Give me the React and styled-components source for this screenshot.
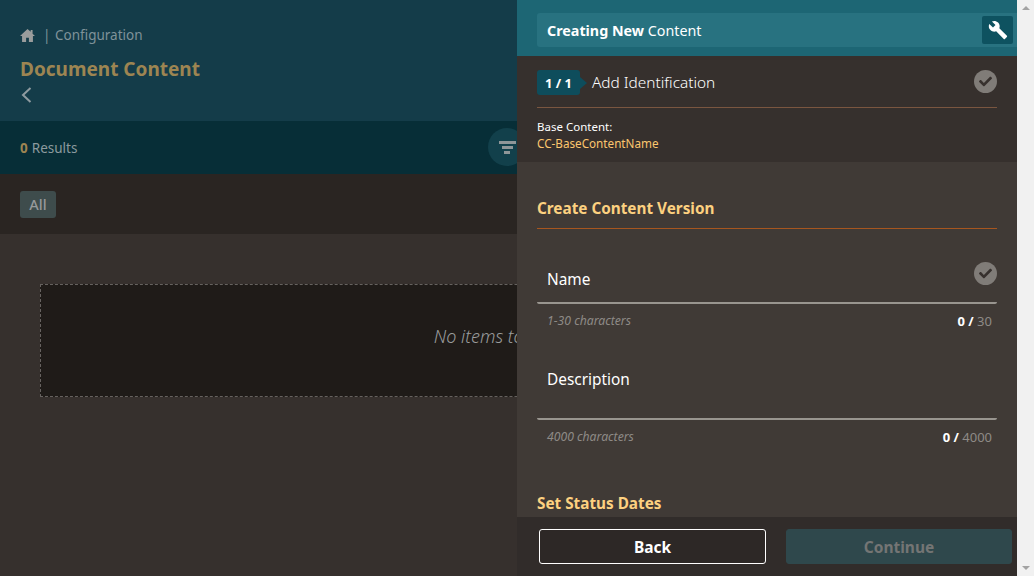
// App.jsx
import React from "react";
import styled, { createGlobalStyle } from "styled-components";
import { FaCheck } from "react-icons/fa";
import { MdBuild } from "react-icons/md";

const GlobalStyle = createGlobalStyle`
  html, body {
    margin: 0;
    padding: 0;
    height: 100%;
    overflow: hidden;
    background: #36302d;
    font-family: "Noto Sans", "Open Sans", sans-serif;
  }
  * { box-sizing: border-box; }
`;

const Screen = styled.div`
  position: relative;
  display: flex;
  width: 1034px;
  height: 576px;
  overflow: hidden;
`;

const Page = styled.main`
  width: 1017px;
  height: 576px;
  display: flex;
  flex-direction: column;
  flex: none;
  background: #36302d;
`;

const Masthead = styled.header`
  height: 121px;
  background: #143c49;
  padding: 25px 20px 0;
`;

const Breadcrumb = styled.div`
  display: flex;
  align-items: center;
  height: 20px;
  color: #7f9299;
  font-size: 13.5px;
`;

const HomeIcon = styled.svg`
  width: 15px;
  height: 15px;
  fill: #9a9c9c;
`;

const Divider = styled.span`
  margin: 0 8px 0 8px;
  width: 4px;
  color: #7f9299;
`;

const PageTitle = styled.h1`
  margin: 0;
  padding-top: 9px;
  font-size: 19px;
  line-height: 30px;
  font-weight: 700;
  color: #9d8552;
`;

const BackChevron = styled.svg`
  display: block;
  margin-top: 2px;
  width: 12px;
  height: 18px;
`;

const ResultsBar = styled.div`
  height: 53px;
  display: flex;
  align-items: center;
  padding: 0 20px;
  background: #072e37;
  font-size: 13.5px;
  color: #8c9a9e;
  b { color: #9d8552; margin-right: 4px; font-weight: 700; }
`;

const FilterButton = styled.span`
  margin-left: 411px;
  margin-top: -1px;
  width: 38px;
  height: 38px;
  flex: none;
  border-radius: 50%;
  background: #12404b;
  display: flex;
  flex-direction: column;
  align-items: center;
  justify-content: center;
  gap: 2px;
`;

const FilterLine = styled.i`
  display: block;
  height: 3px;
  width: ${(p) => p.$w}px;
  background: #8f9698;
`;

const TabStrip = styled.div`
  height: 60px;
  padding: 17px 20px 0;
  background: #2a2522;
`;

const Tab = styled.span`
  display: inline-flex;
  align-items: center;
  justify-content: center;
  width: 36px;
  height: 27px;
  padding-bottom: 2px;
  border-radius: 3px;
  background: #3e4c4c;
  color: #97999a;
  font-size: 14.5px;
  font-weight: 500;
`;

const EmptyArea = styled.div`
  padding: 50px 40px 0;
`;

const EmptyBox = styled.div`
  height: 113px;
  padding-bottom: 9px;
  border: 1px dashed #66625f;
  background: #1f1b18;
  display: flex;
  align-items: center;
  justify-content: center;
  font-size: 18px;
  font-style: italic;
  font-weight: 300;
  color: #9a9c9c;
`;

const Scrollbar = styled.div`
  width: 17px;
  height: 576px;
  flex: none;
  background: #f1f1f1;
  display: flex;
  flex-direction: column;
  justify-content: space-between;
  align-items: center;
  padding: 6px 0;
`;

const ScrollArrow = styled.i`
  width: 0;
  height: 0;
  border-left: 4px solid transparent;
  border-right: 4px solid transparent;
  ${(p) => (p.$down ? "border-top: 4px solid #a3a3a3;" : "border-bottom: 4px solid #a3a3a3;")}
`;

/* the drawer lies over the page */
const Drawer = styled.aside`
  position: absolute;
  top: 0;
  left: 517px;
  width: 500px;
  height: 576px;
  display: flex;
  flex-direction: column;
  background: #403a36;
  color: #fff;
`;

const DrawerTop = styled.div`
  height: 56px;
  flex: none;
  padding: 13px 0 0 20px;
  background: #1d6674;
`;

const TitleBar = styled.div`
  height: 34px;
  display: flex;
  align-items: center;
  justify-content: space-between;
  padding: 0 4px 0 10px;
  background: #287280;
  border-radius: 3px 0 0 3px;
  font-size: 14.3px;
  b { font-weight: 700; }
`;

const ToolButton = styled.span`
  width: 31px;
  height: 28px;
  border-radius: 2px;
  background: #0e5260;
  display: flex;
  align-items: center;
  justify-content: center;
  svg { width: 20px; height: 20px; }
`;

const StepSection = styled.div`
  height: 106px;
  flex: none;
  padding: 14px 20px 0;
  background: #36302d;
`;

const StepRow = styled.div`
  height: 38px;
  display: flex;
  align-items: flex-start;
  border-bottom: 1px solid #7a5640;
  font-size: 15.4px;
  font-weight: 300;
`;

const StepLabel = styled.span`
  line-height: 26px;
  flex: 1;
`;

const StepBadge = styled.span`
  position: relative;
  width: 43px;
  height: 25px;
  margin-right: 12px;
  border-radius: 3px;
  background: #0e4d5c;
  display: flex;
  align-items: center;
  justify-content: center;
  font-size: 13px;
  font-weight: 700;
  &::after {
    content: "";
    position: absolute;
    left: 43px;
    top: 7px;
    border-left: 7px solid #0e4d5c;
    border-top: 6px solid transparent;
    border-bottom: 6px solid transparent;
  }
`;

const CheckDot = styled.span`
  width: 23px;
  height: 23px;
  border-radius: 50%;
  background: #807c78;
  display: flex;
  align-items: center;
  justify-content: center;
  flex: none;
  svg { width: 13px; height: 13px; color: #37312e; }
`;

const BaseInfo = styled.div`
  margin-top: 11px;
  font-size: 11.5px;
  line-height: 16px;
`;

const BaseName = styled.div`
  color: #fcc66e;
  font-size: 11.7px;
`;

const FormArea = styled.div`
  flex: 1;
  min-height: 0;
  overflow: hidden;
  padding: 34px 20px 0;
`;

const SectionTitle = styled.h2`
  margin: 0;
  font-size: 15.3px;
  line-height: 24px;
  font-weight: 700;
  color: #fdd180;
  ${(p) => p.$rule && "height: 33px; border-bottom: 1px solid #a7561f;"}
`;

const Field = styled.div`
  height: ${(p) => p.$h}px;
  border-bottom: 2px solid #99958f;
  border-radius: 0 0 2px 2px;
  padding: ${(p) => p.$top}px 10px 0;
  display: flex;
  justify-content: space-between;
  align-items: flex-start;
  font-size: 15.4px;
  line-height: 24px;
`;

const FieldCheck = styled(CheckDot)`
  margin: -6px -10px 0 0;
`;

const HintRow = styled.div`
  display: flex;
  justify-content: space-between;
  padding: 0 5px 0 10px;
  height: ${(p) => p.$h}px;
  align-items: flex-start;
  font-size: 12.2px;
  line-height: 34px;
  color: #8e8a86;
  em { font-style: italic; }
`;

const Counter = styled.span`
  font-size: 13px;
  b { color: #fff; font-weight: 700; }
`;

const Footer = styled.footer`
  height: 59px;
  flex: none;
  display: flex;
  justify-content: space-between;
  padding: 12px 5px 0 22px;
  background: #312c2a;
`;

const ActionButton = styled.button`
  width: ${(p) => (p.disabled ? 226 : 227)}px;
  height: 35px;
  border-radius: 3px;
  font-family: inherit;
  font-size: 15.5px;
  font-weight: 700;
  border: 1px solid ${(p) => (p.disabled ? "#2f484c" : "#fff")};
  background: ${(p) => (p.disabled ? "#2f484c" : "#2d2826")};
  color: ${(p) => (p.disabled ? "#747574" : "#fff")};
`;

export default function App() {
  return (
    <Screen>
      <GlobalStyle />
      <Page>
        <Masthead>
          <Breadcrumb>
            <HomeIcon viewBox="0 0 16 15">
              <path d="M8 .5 0 8h2.2v6.5h4.3V9.8h3v4.7h4.3V8H16l-2.6-2.5V1.5h-2v2z" />
            </HomeIcon>
            <Divider>|</Divider>
            Configuration
          </Breadcrumb>
          <PageTitle>Document Content</PageTitle>
          <BackChevron viewBox="0 0 12 18">
            <path d="M10.5 2 L3 9 L10.5 16" fill="none" stroke="#8f9ba0" strokeWidth="2" />
          </BackChevron>
        </Masthead>
        <ResultsBar>
          <b>0</b> Results
          <FilterButton>
            <FilterLine $w={17} />
            <FilterLine $w={11} />
            <FilterLine $w={6} />
          </FilterButton>
        </ResultsBar>
        <TabStrip>
          <Tab>All</Tab>
        </TabStrip>
        <EmptyArea>
          <EmptyBox>No items to display</EmptyBox>
        </EmptyArea>
      </Page>
      <Scrollbar>
        <ScrollArrow />
        <ScrollArrow $down />
      </Scrollbar>

      <Drawer>
        <DrawerTop>
          <TitleBar>
            <span>
              <b>Creating New</b> Content
            </span>
            <ToolButton>
              <MdBuild />
            </ToolButton>
          </TitleBar>
        </DrawerTop>
        <StepSection>
          <StepRow>
            <StepBadge>1 / 1</StepBadge>
            <StepLabel>Add Identification</StepLabel>
            <CheckDot>
              <FaCheck />
            </CheckDot>
          </StepRow>
          <BaseInfo>
            Base Content:
            <BaseName>CC-BaseContentName</BaseName>
          </BaseInfo>
        </StepSection>
        <FormArea>
          <SectionTitle $rule>Create Content Version</SectionTitle>
          <Field $h={75} $top={39}>
            Name
            <FieldCheck>
              <FaCheck />
            </FieldCheck>
          </Field>
          <HintRow $h={37}>
            <em>1-30 characters</em>
            <Counter>
              <b>0 /</b> 30
            </Counter>
          </HintRow>
          <Field $h={79} $top={27}>
            Description
          </Field>
          <HintRow $h={71}>
            <em>4000 characters</em>
            <Counter>
              <b>0 /</b> 4000
            </Counter>
          </HintRow>
          <SectionTitle>Set Status Dates</SectionTitle>
        </FormArea>
        <Footer>
          <ActionButton>Back</ActionButton>
          <ActionButton disabled>Continue</ActionButton>
        </Footer>
      </Drawer>
    </Screen>
  );
}
